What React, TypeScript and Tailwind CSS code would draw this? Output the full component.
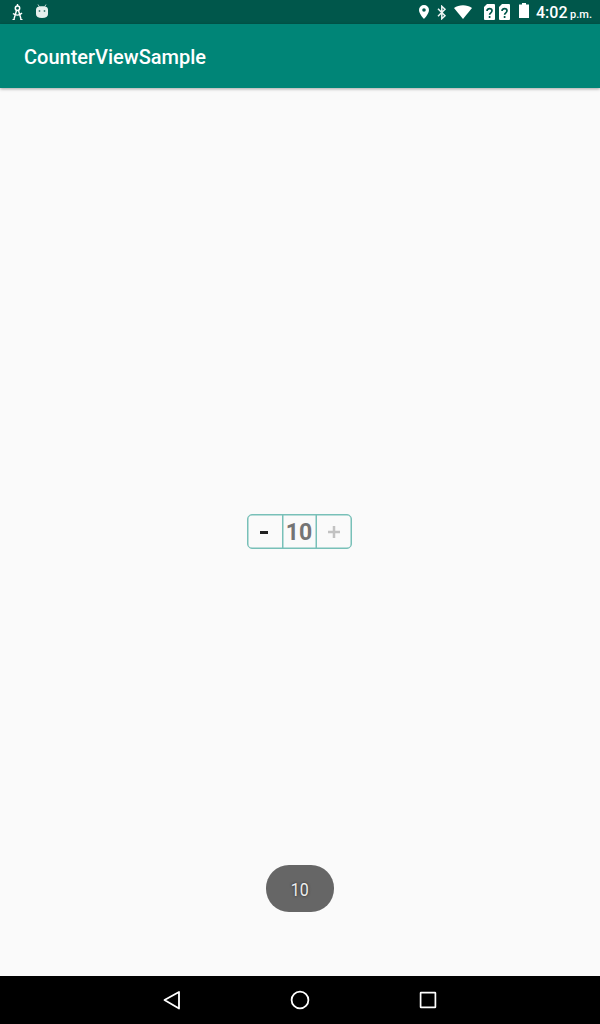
import { useState } from "react";

function CompassIcon() {
  return (
    <svg className="h-[18px] w-3" viewBox="0 0 12 18" fill="none" stroke="#fff" aria-hidden="true">
      <path d="M5.500 1v2M4.500 7.500 2 16M6.500 7.500 9 16M1 10.500c2.500 2.300 6.500 2.200 9-.5" strokeWidth="1.400" />
      <circle cx="5.500" cy="5.200" r="2.200" strokeWidth="1.500" />
      <path d="M.5 16.500h2.300M8.200 16.500h2.300" />
    </svg>
  );
}

function AndroidIcon() {
  return (
    <svg className="h-4 w-3" viewBox="0 0 12 16" aria-hidden="true">
      <path d="m2 1.500 1.500 2.500M10 1.500 8.500 4" stroke="#b5cfcb" />
      <path d="M0 7C0 4.200 2 3.200 6 3.200S12 4.200 12 7v4c0 2.800-2 4-6 4s-6-1.200-6-4Z" fill="#e6efed" />
      <circle cx="3.500" cy="8" r=".9" fill="#447f77" />
      <circle cx="8.500" cy="8" r=".9" fill="#447f77" />
    </svg>
  );
}

function PinIcon() {
  return (
    <svg className="h-[14px] w-[10px]" viewBox="0 0 10 14" aria-hidden="true">
      <path fillRule="evenodd" d="M5 0a5 5 0 0 0-5 5c0 3.700 5 9 5 9s5-5.300 5-9a5 5 0 0 0-5-5Zm0 6.800A1.800 1.800 0 1 1 5 3.200a1.800 1.800 0 0 1 0 3.600Z" fill="#fff" />
    </svg>
  );
}

function BluetoothIcon() {
  return (
    <svg className="h-[15px] w-[10px]" viewBox="0 0 10 15" fill="none" stroke="#edf4f3" strokeWidth="1.500" aria-hidden="true">
      <path d="m1 3.700 7 7-3.200 3V1.300l3.200 3-7 7" />
    </svg>
  );
}

function WifiIcon() {
  return (
    <svg className="h-[14px] w-[18px]" viewBox="0 0 18 14" aria-hidden="true">
      <path d="M0 3C5-.8 13-.8 18 3L9 14Z" fill="#fff" />
    </svg>
  );
}

function SimIcon() {
  return (
    <svg className="h-4 w-[11px]" viewBox="0 0 11 16" aria-hidden="true">
      <path d="M3 0h7a1 1 0 0 1 1 1v14a1 1 0 0 1-1 1H1a1 1 0 0 1-1-1V3Z" fill="#fff" />
      <path d="M3 7c0-3.300 5-3.100 5-.2 0 2-2.400 2-2.400 4M5.600 12v2" fill="none" stroke="#00574b" strokeWidth="1.700" />
    </svg>
  );
}

function BatteryIcon() {
  return (
    <svg className="h-[15px] w-[10px]" viewBox="0 0 10 15" aria-hidden="true">
      <path d="M3 0h4v1.500h3V15H0V1.500h3Z" fill="#fff" />
    </svg>
  );
}

function StatusBar() {
  return (
    <div className="flex h-6 shrink-0 items-start bg-[#00574b] pr-2 text-white">
      <div className="ml-3 mt-[3px]"><CompassIcon /></div>
      <div className="ml-3 mt-[3px]"><AndroidIcon /></div>
      <div className="ml-auto mt-[5px]"><PinIcon /></div>
      <div className="ml-2 mt-[5px]"><BluetoothIcon /></div>
      <div className="ml-[7px] mt-[5px]"><WifiIcon /></div>
      <div className="ml-3 mt-1"><SimIcon /></div>
      <div className="ml-1 mt-1"><SimIcon /></div>
      <div className="ml-[9px] mt-[3px]"><BatteryIcon /></div>
      <div className="ml-[7px] flex w-14 items-baseline justify-between whitespace-nowrap leading-6">
        <span className="text-base/[25px] font-medium">4:02</span>
        <span className="text-[11px] font-medium">p.m.</span>
      </div>
    </div>
  );
}

function Counter({ value, max, onChange }: { value: number; max: number; onChange: (value: number) => void }) {
  return (
    <div className="grid h-[35px] w-[105px] grid-cols-[34px_35px_1fr] grid-rows-[33px] rounded-[5px] border border-solid border-[#78c0b8] text-[23px] font-bold shadow-[inset_0_0_0_0.5px_#78c0b8]">
      <button className="flex items-center justify-center text-[#212121]" aria-label="Decrease" onClick={() => onChange(value - 1)}>
        <svg className="h-[33px] w-[34px]" viewBox="0 0 34 33" aria-hidden="true"><path d="M12 17.500h8" stroke="currentColor" strokeWidth="3" /></svg>
      </button>
      <div className="flex items-center justify-center border-x border-[#78c0b8] pr-px pt-[2px] leading-none text-[#747474] shadow-[inset_0.5px_0_#78c0b8,inset_-0.5px_0_#78c0b8]">{value}</div>
      <button className="flex items-center justify-center text-[#c2c2c2]" disabled={value >= max} aria-label="Increase" onClick={() => onChange(value + 1)}>
        <svg className="h-[33px] w-[34px]" viewBox="0 0 34 33" aria-hidden="true"><path d="M17 11v12M11 17h12" stroke="currentColor" strokeWidth="2.500" /></svg>
      </button>
    </div>
  );
}

function NavigationBar() {
  return (
    <nav className="flex h-12 shrink-0 items-center justify-center gap-[104px] bg-black text-white">
      <button aria-label="Back"><svg className="size-6" viewBox="0 0 24 24" fill="none" stroke="currentColor" strokeWidth="1.800"><path d="m4.500 12 14.500-8v16.500Z" strokeLinejoin="round" /></svg></button>
      <button aria-label="Home"><svg className="size-6" viewBox="0 0 24 24" fill="none" stroke="currentColor" strokeWidth="1.800"><circle cx="12" cy="12" r="8.400" /></svg></button>
      <button aria-label="Recent apps"><svg className="size-6" viewBox="0 0 24 24" fill="none" stroke="currentColor" strokeWidth="1.700"><rect x="4.600" y="4.600" width="14.800" height="14.800" rx=".4" /></svg></button>
    </nav>
  );
}

export default function App() {
  const [count, setCount] = useState(10);

  return (
    <div className="flex h-[1024px] w-[600px] flex-col overflow-hidden bg-[#fafafa] font-['Roboto',sans-serif]">
      <StatusBar />
      <header className="z-10 flex h-16 shrink-0 items-center bg-[#008577] px-6 pt-[2px] shadow-[0_1px_3px_rgba(0,0,0,0.35)]">
        <h1 className="text-xl font-medium text-white">CounterViewSample</h1>
      </header>
      <main className="relative flex flex-1 items-center justify-center pr-px pb-[2px]">
        <Counter value={count} max={10} onChange={setCount} />
        <div className="absolute bottom-16 left-[266px] flex h-[47px] w-[68px] items-center justify-center rounded-[23px] bg-[#666] pt-[2px]">
          <span className="inline-block scale-x-[0.84] text-[19px] leading-none text-[#eee] [text-shadow:0_0_3px_#222]">{count}</span>
        </div>
      </main>
      <NavigationBar />
    </div>
  );
}
